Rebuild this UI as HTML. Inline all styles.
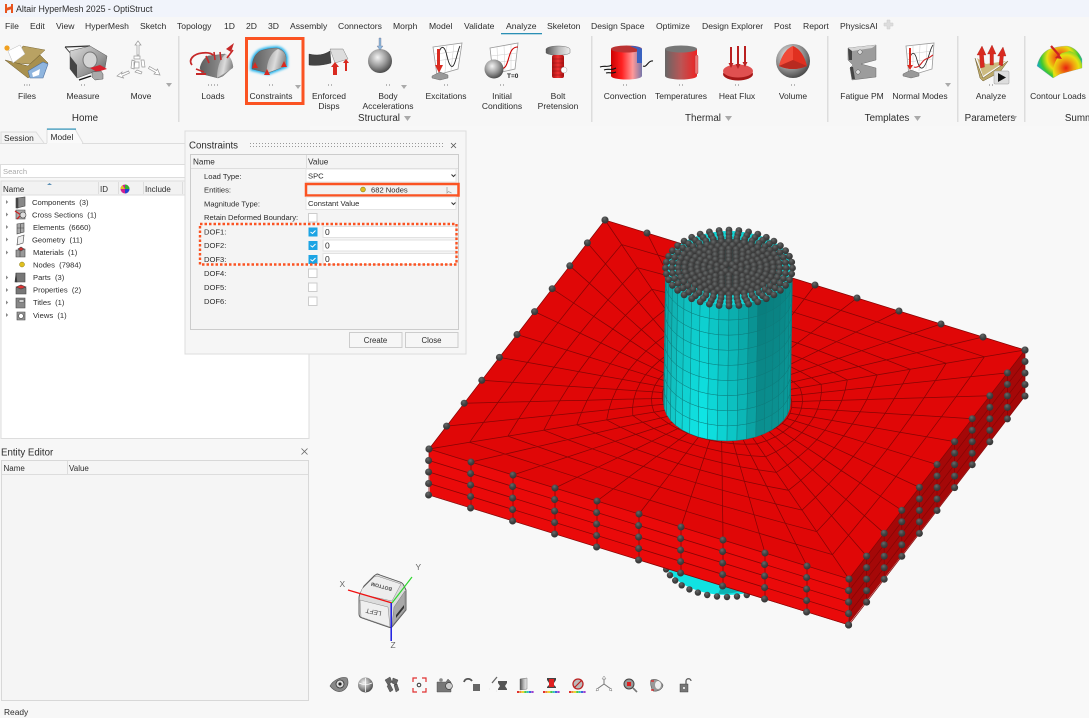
<!DOCTYPE html>
<html><head><meta charset="utf-8"><title>Altair HyperMesh 2025 - OptiStruct</title>
<style>
html,body{margin:0;padding:0;background:#f7f7f7;width:1089px;height:718px;overflow:hidden}
svg{display:block;filter:blur(.3px)}
text{font-family:"Liberation Sans",sans-serif;fill:#2c2c2c;font-size:8.5px}
.m text,.m{font-size:8.6px}
.r text{font-size:8.5px;text-anchor:middle}
.g text{font-size:9.8px;text-anchor:middle}
.t text{font-size:7.6px}
.d text{font-size:7.6px}
.h{font-size:8.2px}
</style></head><body>
<svg id="s" xmlns="http://www.w3.org/2000/svg" width="1089" height="718" viewBox="0 0 1089 718">
<defs>
<radialGradient id="ball" cx=".4" cy=".3" r=".75"><stop offset="0" stop-color="#666a6a"/><stop offset=".5" stop-color="#444"/><stop offset="1" stop-color="#303030"/></radialGradient>
<radialGradient id="sph" cx=".4" cy=".35" r=".75"><stop offset="0" stop-color="#f4f4f4"/><stop offset=".5" stop-color="#999"/><stop offset="1" stop-color="#333"/></radialGradient>
<linearGradient id="met" x1="0" x2="1"><stop offset="0" stop-color="#555"/><stop offset=".55" stop-color="#bbb"/><stop offset="1" stop-color="#eee"/></linearGradient>
<linearGradient id="body" x1="0" x2="1"><stop offset="0" stop-color="#5e5e5e"/><stop offset="1" stop-color="#a8a8a8"/></linearGradient>
<linearGradient id="front" x1="0" x2="1" y1="0" y2=".3"><stop offset="0" stop-color="#9a9a9a"/><stop offset=".55" stop-color="#dcdcdc"/><stop offset="1" stop-color="#8a8a8a"/></linearGradient>
<linearGradient id="met2" x1="0" x2="1" y1="0" y2="1"><stop offset="0" stop-color="#ddd"/><stop offset=".6" stop-color="#999"/><stop offset="1" stop-color="#555"/></linearGradient>
<linearGradient id="redc" x1="0" x2="1"><stop offset="0" stop-color="#c00"/><stop offset=".35" stop-color="#f22"/><stop offset=".7" stop-color="#f99"/><stop offset="1" stop-color="#77a"/></linearGradient>
<linearGradient id="tmp" x1="0" x2="1"><stop offset="0" stop-color="#666"/><stop offset=".5" stop-color="#b55"/><stop offset="1" stop-color="#e22"/></linearGradient>
<linearGradient id="bolt" x1="0" x2="1"><stop offset="0" stop-color="#a11"/><stop offset=".5" stop-color="#e33"/><stop offset="1" stop-color="#a11"/></linearGradient>
<radialGradient id="rain" gradientUnits="userSpaceOnUse" cx="1060" cy="58" r="26"><stop offset="0" stop-color="#e82010"/><stop offset=".3" stop-color="#f09010"/><stop offset=".5" stop-color="#e8e010"/><stop offset=".72" stop-color="#40c830"/><stop offset=".9" stop-color="#10b0c0"/><stop offset="1" stop-color="#2040e0"/></radialGradient>
<radialGradient id="rain2" gradientUnits="userSpaceOnUse" cx="1066" cy="68" r="20"><stop offset="0" stop-color="#e82010"/><stop offset=".4" stop-color="#f0a010"/><stop offset=".65" stop-color="#e8e010"/><stop offset="1" stop-color="#40c840"/></radialGradient>
<filter id="glow" x="-30%" y="-30%" width="160%" height="160%"><feGaussianBlur stdDeviation="1.4"/></filter>
</defs>

<rect width="1089" height="718" fill="#f8f8f8"/>
<rect width="1089" height="17" fill="#f1f4fb"/>
<rect y="17" width="1089" height="109" fill="#f7f7f7"/>

<g fill="#e8541e"><rect x="5" y="4" width="2" height="9"/><rect x="11" y="4" width="2" height="9"/><path d="M6 8l6-2v3l-6 2z"/></g>
<text x="16" y="12" style="font-size:8.8px">Altair HyperMesh 2025 - OptiStruct</text>

<g class="m">
<text x="5" y="29">File</text><text x="30" y="29">Edit</text><text x="56" y="29">View</text><text x="85" y="29">HyperMesh</text><text x="140" y="29">Sketch</text><text x="177" y="29">Topology</text><text x="224" y="29">1D</text><text x="246" y="29">2D</text><text x="268" y="29">3D</text><text x="290" y="29">Assembly</text><text x="338" y="29">Connectors</text><text x="393" y="29">Morph</text><text x="429" y="29">Model</text><text x="464" y="29">Validate</text><text x="506" y="29">Analyze</text><text x="547" y="29">Skeleton</text><text x="591" y="29">Design Space</text><text x="656" y="29">Optimize</text><text x="702" y="29">Design Explorer</text><text x="774" y="29">Post</text><text x="803" y="29">Report</text><text x="840" y="29">PhysicsAI</text>
</g>
<path d="M884 23h3v-3h3v3h3v3h-3v3h-3v-3h-3z" fill="#ddd" stroke="#ccc" stroke-width=".5"/>
<rect x="501" y="33" width="41" height="1.3" fill="#2a8fb5"/>

<!-- ribbon separators -->
<g fill="#ddd"><rect x="178" y="36" width="1.5" height="86"/><rect x="591" y="36" width="1.5" height="86"/><rect x="827" y="36" width="1.5" height="86"/><rect x="957" y="36" width="1.5" height="86"/><rect x="1024" y="36" width="1.5" height="86"/></g>

<!-- Files -->
<g>
<path d="M23 46l22 4-15 14-17-1z" fill="#b9a263" stroke="#7d6a35" stroke-width=".5"/>
<path d="M5 60l23 18 20-15-8-8-12 11z" fill="#a8904e" stroke="#6e5c2e" stroke-width=".5"/>
<path d="M8 51l12-6 5 9-12 9z" fill="#fff" stroke="#bbb" stroke-width=".5"/>
<circle cx="7" cy="48" r="2.600" fill="#f0a020"/>
<path d="M28 71l15-9 5 2-5 14-13 0z" fill="#8fb5de" stroke="#4e6f9e" stroke-width=".6"/><path d="M32 73l8-4-1 6-6 2z" fill="#fff"/>
</g>
<!-- Measure -->
<g>
<path d="M65 47l25-1" stroke="#333" stroke-width="1.200" fill="none"/><path d="M65 47l7 8" stroke="#333" stroke-width=".9"/>
<path d="M70 51l20-5 17 10-2 12-28 10-7-9z" fill="url(#met2)" stroke="#555" stroke-width=".5"/>
<path d="M70 56l7 9v13l-7-9z" fill="#444"/>
<ellipse cx="90" cy="60" rx="7" ry="8" fill="#d4d4d4" stroke="#777"/>
<path d="M90 68l10-3 7 4-10 3z" fill="#d8202c"/>
<path d="M92 72l9-1 2 3v5l-8 1-3-3z" fill="#aaa" stroke="#555" stroke-width=".5"/>
<path d="M79 80l12-4" stroke="#111" stroke-width="1.400"/>
</g>
<!-- Move -->
<g fill="#fff" stroke="#999" stroke-width=".7">
<path d="M138 41l3 4h-2v10h-2v-10h-2z"/>
<path d="M117 76l5-4-.5 2 7-3 1 2-7 3 1 2z"/>
<path d="M160 75l-6-1 1.500-1.500-7-4 1-2 7 4 1-1.500z"/>
<path d="M134 56h6v3h-6z M132 60l3 1-1 8-3-1z M141 60h3l1 7h-3z M137 70l5 2-1 2-6-2z M134 62h5v6h-5z"/>
</g>
<path d="M166 83h6l-3 4z" fill="#aaa"/>
<!-- Loads -->
<g>
<path d="M192 65c-4-5 1-11 10-12 7-1 12 1 11 4" fill="none" stroke="#c62828" stroke-width="1.800"/>
<path d="M200 68c1-5 4-10 8-12l17-2c5 2 7 8 8 13l-10 9-5 2-16-4z" fill="url(#body)" stroke="#555" stroke-width=".4"/>
<path d="M217 78c0-10 3-20 9-24 5 3 7 8 7 14z" fill="url(#front)"/>
<path d="M233 50l-6 8M221 60l-1-8M215 60l-1-8M209 63l-3-7M204 72l-8-3" stroke="#c62828" stroke-width="1.600" fill="none"/>
<path d="M234 43l-3 9-5-3z" fill="#c62828"/><path d="M196 74h10" stroke="#c62828" stroke-width="2"/>
</g>
<!-- Constraints -->
<rect x="246.500" y="38.500" width="56.500" height="65" fill="none" stroke="#fb5322" stroke-width="3"/>
<g>
<path d="M252 68c0-8 3-14 8-17 5-2 12-3 17-3 5 1 8 4 9 9l0 9-18 7-16-4z" fill="none" stroke="#18b0ee" stroke-width="3.600" filter="url(#glow)"/>
<path d="M252 68c0-8 3-14 8-17 5-2 12-3 17-3 5 1 8 4 9 9l0 9-18 7-16-4z" fill="url(#body)" stroke="#555" stroke-width=".4"/>
<path d="M267 73c-1-9 3-20 11-24 5 2 7 6 8 9l0 8z" fill="url(#front)"/>
<path d="M255 62l3 6h-6zM267 69l3 6h-6zM284 61l3 6h-6z" fill="#d92a20"/>
</g>
<path d="M295 85h6l-3 4z" fill="#aaa"/>
<!-- Enforced -->
<g>
<path d="M309 54c8 2 15 1 21-3l1 12c-7 2-15 3-22 2z" fill="#444" stroke="#222" stroke-width=".4"/>
<path d="M330 49l13 0 5 10-13 4z" fill="#ddd" stroke="#666" stroke-width=".4"/>
<path d="M335 62l4 5h-2v8h-4v-8h-2z M346 59l3 4h-2v8h-2v-8h-2z" fill="#d92a20"/>
</g>
<!-- Body -->
<circle cx="380" cy="61" r="12" fill="url(#sph)"/>
<path d="M379 38h2v8h2l-3 4-3-4h2z" fill="#8fb8dc" stroke="#557" stroke-width=".3"/>
<path d="M401 85h6l-3 4z" fill="#aaa"/>
<!-- Excitations -->
<g>
<path d="M433 47l29-4-4 26-21 6z" fill="#fff" stroke="#999" stroke-width=".8"/>
<path d="M440 46l-1 27M447 45l-2 27M454 44l-3 26M435 54l26-3M435 61l24-3" stroke="#ccc" stroke-width=".5"/>
<path d="M439 52c3-8 6-5 8 4s5 15 8 6 3-12 5-16" fill="none" stroke="#222" stroke-width=".9"/>
<path d="M437 49h3v16h3l-4 8-4-8h2z" fill="#d92a20"/>
<path d="M432 76l8-4 8 3v3l-8 2-8-2z" fill="#999" stroke="#555" stroke-width=".4"/>
</g>
<!-- Initial -->
<g>
<path d="M490 48l28-5-3 26-22 5z" fill="#fff" stroke="#999" stroke-width=".8"/>
<path d="M497 47l1 26M504 46l1 25M511 45l0 25M491 56l26-3M492 63l24-3" stroke="#ccc" stroke-width=".5"/>
<path d="M500 69c6 0 7-5 9-12s4-10 9-10" fill="none" stroke="#c00" stroke-width="1.100"/>
<circle cx="494" cy="69" r="9.500" fill="url(#sph)"/>
<text x="507" y="78" style="font-size:6.500px;font-weight:bold;fill:#222">T=0</text>
</g>
<!-- Bolt -->
<g>
<path d="M546 49c2-4 22-4 24 0v4c-4 3-20 3-24 0z" fill="url(#met)" stroke="#555" stroke-width=".4"/>
<rect x="552" y="55" width="12" height="23" rx="2" fill="url(#bolt)"/>
<path d="M552 59h12M552 63h12M552 67h12M552 71h12M552 75h12" stroke="#811" stroke-width=".6"/>
<circle cx="564" cy="70" r="3" fill="#fff" stroke="#888" stroke-width=".4"/>
</g>
<!-- Convection -->
<g>
<rect x="611" y="49" width="31" height="27" fill="url(#redc)"/><ellipse cx="626.500" cy="76" rx="15.500" ry="3.500" fill="url(#redc)"/>
<ellipse cx="626.500" cy="49" rx="15.500" ry="3.500" fill="#b33"/><path d="M630 46c5 0 11 1 12 3v14h-5v-14z" fill="#3a62c0"/>
<path d="M600 67c5-2 7 1 12-2 M604 70c4-2 7 1 12-2 M606 73c4-1 6 1 10-1 M643 66c4 2 5-6 10-5" stroke="#111" stroke-width="1.100" fill="none"/>
</g>
<!-- Temperatures -->
<g>
<rect x="665" y="49" width="32" height="27" fill="url(#tmp)"/><ellipse cx="681" cy="76" rx="16" ry="3.500" fill="url(#tmp)"/><ellipse cx="681" cy="49" rx="16" ry="3.500" fill="#777"/>
<rect x="695" y="55" width="3" height="19" rx="1.500" fill="#e77" stroke="#a33" stroke-width=".4"/>
</g>
<!-- Heat Flux -->
<g>
<ellipse cx="738" cy="74" rx="15" ry="6.500" fill="#a51818"/><ellipse cx="738" cy="71" rx="15" ry="6.500" fill="#e05050"/>
<path d="M730 47h2v16h1.500l-2.500 5-2.500-5h1.500zM737 46h2v18h1.500l-2.500 5-2.500-5h1.500zM744 46h2v16h1.500l-2.500 5-2.500-5h1.500z" fill="#b92020"/>
</g>
<!-- Volume -->
<g>
<circle cx="793" cy="61" r="17" fill="url(#sph)"/>
<path d="M793 46Q783 50 779 66Q793 72 807 66Q803 50 793 46z" fill="#e03020"/>
<path d="M793 60L793 46Q783 50 779 66z" fill="#f04a38"/><path d="M793 60L779 66Q793 72 807 66z" fill="#b82a20"/>
</g>
<!-- Fatigue PM -->
<g>
<path d="M848 48l28-3v15l-15 4 15 4v9l-24 3-2-12 3-3-3-3-2-2z" fill="#9c9c9c" stroke="#555" stroke-width=".4"/>
<path d="M848 48l28-3-4 3-20 3z" fill="#d8d8d8"/>
<path d="M848 48l4 3v9l-3 0zM850 67l3 0 2 12-3 0z" fill="#444"/>
<circle cx="860" cy="52" r="2.200" fill="#ddd" stroke="#555" stroke-width=".5"/><circle cx="858" cy="72" r="2.200" fill="#ddd" stroke="#555" stroke-width=".5"/>
</g>
<!-- Normal modes -->
<g>
<path d="M906 46l28-3-2 26-23 7z" fill="#fff" stroke="#999" stroke-width=".8"/>
<path d="M913 46l0 27M920 45l-1 26M927 44l-1 25M907 54l26-3M908 62l24-3" stroke="#ccc" stroke-width=".5"/>
<path d="M909 60c3-10 6-8 8 0s5 12 9 3 4-14 7-18" fill="none" stroke="#222" stroke-width=".8"/>
<path d="M914 67c6 2 8-7 12-8s5-3 7-4" fill="none" stroke="#c22" stroke-width="1.100"/>
<path d="M909 48h2v17h2l-3 5-3-5h2z" fill="#d92a20"/>
<path d="M903 74l8-4 8 3v3l-8 2-8-2z" fill="#999" stroke="#555" stroke-width=".4"/>
</g>
<path d="M945 83h6l-3 4z" fill="#aaa"/>
<!-- Analyze -->
<g>
<path d="M975 58l8 20 25-17-8 11-17 9-3-3z" fill="#bba868" stroke="#6e5c2e" stroke-width=".5"/>
<path d="M977 58l6 18 23-15-20 3z" fill="#cdbb80"/>
<path d="M982 46l4 9h-2.500l1 12-4 1-1-13h-2.500z M992 45l4 9h-2.500l0 11-3.500 0 0-11h-2.500z M1003 47l3 9h-2.500l-1 10-3.500-1 1-9h-2.500z" fill="#d92a20" stroke="#9a1a14" stroke-width=".3"/>
<rect x="994" y="71" width="15" height="13" rx="1" fill="#ddd" stroke="#999" stroke-width=".5"/>
<path d="M998 73l8 4.500-8 4.500z" fill="#111"/>
</g>
<!-- Contour -->
<g>
<path d="M1037 66c2-9 7-15 13-17 6-2 12-3 17-3 7 1 12 6 15 13v9l-22 6-7 4z" fill="url(#rain)" stroke="#99a" stroke-width=".3"/>
<path d="M1053 78c-1-9 2-20 9-25l8-2c6 2 10 7 12 13v4l-22 6z" fill="url(#rain2)"/>
<path d="M1051 46l8 9" stroke="#c22" stroke-width="2.200"/><path d="M1062 59l-7-1 4-4z" fill="#c22"/>
</g>
<!-- dots -->
<g fill="#777">
<rect x="24" y="84.500" width="1" height="1"/><rect x="26.500" y="84.500" width="1" height="1"/><rect x="29" y="84.500" width="1" height="1"/>
<rect x="81" y="84.500" width="1" height="1"/><rect x="84" y="84.500" width="1" height="1"/>
<rect x="208" y="84.500" width="1" height="1"/><rect x="211" y="84.500" width="1" height="1"/><rect x="214" y="84.500" width="1" height="1"/><rect x="217" y="84.500" width="1" height="1"/>
<rect x="269" y="84.500" width="1" height="1"/><rect x="272" y="84.500" width="1" height="1"/>
<rect x="328" y="84.500" width="1" height="1"/><rect x="331" y="84.500" width="1" height="1"/>
<rect x="386" y="84.500" width="1" height="1"/><rect x="389" y="84.500" width="1" height="1"/>
<rect x="444" y="84.500" width="1" height="1"/><rect x="447" y="84.500" width="1" height="1"/>
<rect x="500" y="84.500" width="1" height="1"/><rect x="503" y="84.500" width="1" height="1"/>
<rect x="623" y="84.500" width="1" height="1"/><rect x="626" y="84.500" width="1" height="1"/>
<rect x="679" y="84.500" width="1" height="1"/><rect x="682" y="84.500" width="1" height="1"/>
<rect x="735" y="84.500" width="1" height="1"/><rect x="738" y="84.500" width="1" height="1"/>
<rect x="791" y="84.500" width="1" height="1"/><rect x="794" y="84.500" width="1" height="1"/>
<rect x="989" y="84.500" width="1" height="1"/><rect x="992" y="84.500" width="1" height="1"/>
</g>
<g class="r">
<text x="27" y="99">Files</text><text x="83" y="99">Measure</text><text x="141" y="99">Move</text><text x="213" y="99">Loads</text><text x="271" y="99">Constraints</text>
<text x="329" y="99">Enforced</text><text x="329" y="109">Disps</text><text x="388" y="99">Body</text><text x="388" y="109">Accelerations</text>
<text x="446" y="99">Excitations</text><text x="502" y="99">Initial</text><text x="502" y="109">Conditions</text><text x="558" y="99">Bolt</text><text x="558" y="109">Pretension</text>
<text x="625" y="99">Convection</text><text x="681" y="99">Temperatures</text><text x="737" y="99">Heat Flux</text><text x="793" y="99">Volume</text>
<text x="862" y="99">Fatigue PM</text><text x="920" y="99">Normal Modes</text><text x="991" y="99">Analyze</text><text x="1058" y="99">Contour Loads</text>
</g>
<g class="g">
<text x="85" y="121">Home</text><text x="379" y="121">Structural</text><text x="703" y="121">Thermal</text><text x="887" y="121">Templates</text><text x="990" y="121">Parameters</text><text x="1079" y="121" >Summ</text>
</g>
<g fill="#aaa"><path d="M404 116h7l-3.500 5zM725 116h7l-3.500 5zM914 116h7l-3.500 5zM1012 116h5l-2.500 4z"/></g>

<!-- left panel -->
<rect x="0" y="126" width="310" height="592" fill="#f7f7f7"/>
<path d="M0 143.500h47M82 143.500h227" stroke="#ddd"/>
<path d="M1 143v-11h35l8 11" fill="#f4f4f4" stroke="#ddd"/>
<path d="M47 143v-14h28l8 14" fill="#fafafa" stroke="#ddd"/>
<rect x="47" y="128.500" width="29" height="1.200" fill="#2a8fb5"/>
<text x="4" y="141" style="font-size:8.400px">Session</text><text x="50.500" y="140" style="font-size:8.400px">Model</text>
<rect x="0.500" y="164.500" width="308" height="13" fill="#fff" stroke="#ddd"/>
<text x="3" y="174" style="font-size:7.600px;fill:#aaa">Search</text>
<rect x="1" y="181" width="308" height="14" fill="#f2f2f2" stroke="#ddd"/>
<rect x="1" y="195" width="308" height="243.500" fill="#fff" stroke="#ddd"/>
<path d="M98.500 182v12M118.500 182v12M143.500 182v12M182.500 182v12" stroke="#ddd"/>
<text class="h" x="3" y="192" style="font-size:8px">Name</text><text x="100" y="192" style="font-size:8px">ID</text><text x="145" y="192" style="font-size:8px">Include</text>
<path d="M47 185l2.500-2 2.500 2z" fill="#5a8fb5"/>
<circle cx="125" cy="189" r="4.500" fill="#d02090"/><path d="M125 189v-4.500a4.500 4.500 0 0 1 4.500 4.500z" fill="#30b030"/><path d="M125 189h4.500a4.500 4.500 0 0 1-4.500 4.500z" fill="#2040d0"/><path d="M125 189l-4.500 0a4.500 4.500 0 0 1 2-3.700z" fill="#e0c020"/>
<!-- tree -->
<path d="M6 200l2.200 2-2.200 2zM6 212.500l2.200 2-2.200 2zM6 225l2.200 2-2.200 2zM6 237.500l2.200 2-2.200 2zM6 250.500l2.200 2-2.200 2zM6 275.500l2.200 2-2.200 2zM6 288l2.200 2-2.200 2zM6 300.500l2.200 2-2.200 2zM6 313l2.200 2-2.200 2z" fill="#888"/>
<g class="t">
<text x="32" y="205">Components&#160; (3)</text><text x="32" y="217.500">Cross Sections&#160; (1)</text><text x="33" y="230">Elements&#160; (6660)</text><text x="32" y="242.500">Geometry&#160; (11)</text><text x="33" y="255">Materials&#160; (1)</text><text x="33" y="267.500">Nodes&#160; (7984)</text><text x="33" y="280">Parts&#160; (3)</text><text x="33" y="292.500">Properties&#160; (2)</text><text x="33" y="305">Titles&#160; (1)</text><text x="33" y="318">Views&#160; (1)</text>
</g>
<g stroke="#444" stroke-width=".6">
<path d="M17 198l8-1v9l-8 2z" fill="#888"/><path d="M16 198l2 0v10h-2z" fill="#444"/>
<path d="M16 210l9 0v9h-9z" fill="#aaa"/><path d="M15 211l6 4-4 4" fill="none" stroke="#c22" stroke-width="1.300"/><circle cx="23" cy="215" r="3" fill="#ddd"/>
<path d="M17 224l7-1v9l-7 2zM20.500 224v9M17 228h7" fill="#aaa"/>
<path d="M18 237l6-2-1 8-6 2z" fill="#eee"/>
<path d="M16 250h4v7h-4zM20 249h5v8h-5z" fill="#999"/><path d="M18 249l3-2 3 2-3 2z" fill="#c33"/>
<path d="M16 273h9v9h-9z" fill="#777"/><path d="M16 273l-1 9h2z" fill="#333"/>
<path d="M16 288l5-3 5 3v6h-10z" fill="#777"/><path d="M16 287l5-2 5 2-5 2z" fill="#d33"/>
<path d="M16 298h9v10h-9z" fill="#888"/><path d="M19 300h5v2h-5z" fill="#fff"/>
<path d="M17 312h8v8h-8z" fill="#999"/><circle cx="21" cy="316" r="2.500" fill="#fff"/>
</g>
<circle cx="22" cy="264.500" r="2.500" fill="#e0c020" stroke="#8a7a10" stroke-width=".5"/>

<!-- entity editor -->
<text x="1" y="455.500" style="font-size:9.700px">Entity Editor</text>
<path d="M301.500 448.500l6 6M307.500 448.500l-6 6" stroke="#666" stroke-width=".8"/>
<rect x="1.500" y="460.500" width="307" height="240" fill="#f5f5f5" stroke="#d8d8d8"/>
<path d="M2 474.500h306M67.500 461v13" stroke="#ddd"/>
<text x="3.500" y="471" style="font-size:8px">Name</text><text x="69" y="471" style="font-size:8px">Value</text>
<text x="4" y="715" style="font-size:8.400px">Ready</text>

<g id="scene"></g>

<!-- dialog -->
<rect x="185" y="131" width="281" height="223" fill="#f6f6f6" stroke="#ddd"/>
<text x="189" y="148.500" style="font-size:9.700px">Constraints</text>
<path d="M250 143.500H443M250 146.500H443" stroke="#999" stroke-width="1" stroke-dasharray="1 2"/>
<path d="M451 143l5 5M456 143l-5 5" stroke="#555" stroke-width=".8"/>
<rect x="190.500" y="154.500" width="268" height="175" fill="#f4f4f4" stroke="#ccc"/>
<path d="M191 168.500h267M306.500 155v13" stroke="#ddd"/>
<text x="193" y="164.500" style="font-size:8.200px">Name</text><text x="308" y="164.500" style="font-size:8.200px">Value</text>
<g class="d">
<text x="204" y="179">Load Type:</text><text x="204" y="192.500">Entities:</text><text x="204" y="206.500">Magnitude Type:</text><text x="204" y="220">Retain Deformed Boundary:</text>
<text x="204" y="234.500">DOF1:</text><text x="204" y="248">DOF2:</text><text x="204" y="262">DOF3:</text><text x="204" y="276">DOF4:</text><text x="204" y="290">DOF5:</text><text x="204" y="304">DOF6:</text>
</g>
<rect x="306" y="169" width="150" height="13" fill="#fff" stroke="#e4e4e4"/>
<text x="308" y="178.500" style="font-size:7.600px">SPC</text>
<path d="M451.500 174.500l2 2 2-2" stroke="#333" fill="none"/>
<rect x="307" y="184.500" width="151" height="11" fill="#f2f2f2"/>
<circle cx="363" cy="189.500" r="2.400" fill="#e0c020" stroke="#8a7a10" stroke-width=".6"/>
<text x="371" y="192.500" style="font-size:7.600px">682 Nodes</text>
<path d="M447 187l0 6 1.500-1.500 3 1.500" stroke="#999" fill="none" stroke-width=".7"/>
<rect x="306" y="184" width="152.500" height="11.500" fill="none" stroke="#fb5322" stroke-width="2.500"/>
<rect x="306" y="197" width="150" height="12.500" fill="#fff" stroke="#e4e4e4"/>
<text x="308" y="206" style="font-size:7.600px">Constant Value</text>
<path d="M451.500 202.500l2 2 2-2" stroke="#333" fill="none"/>
<g fill="#fff" stroke="#ccc">
<rect x="308.500" y="213.500" width="8.500" height="8.500"/>
<rect x="308.500" y="269" width="8.500" height="8.500"/><rect x="308.500" y="283" width="8.500" height="8.500"/><rect x="308.500" y="297" width="8.500" height="8.500"/>
</g>
<g fill="#fff" stroke="#e2e2e2"><rect x="323" y="226.500" width="133" height="11"/><rect x="323" y="240" width="133" height="11"/><rect x="323" y="253.500" width="133" height="11"/></g>
<g fill="#1ca4e4"><rect x="308.500" y="227.500" width="9" height="9"/><rect x="308.500" y="241" width="9" height="9"/><rect x="308.500" y="255" width="9" height="9"/></g>
<g stroke="#fff" stroke-width="1" fill="none"><path d="M310.500 232l2 1.500 3-3"/><path d="M310.500 245.500l2 1.500 3-3"/><path d="M310.500 259.500l2 1.500 3-3"/></g>
<g style="font-size:7.600px"><text x="325" y="235">0</text><text x="325" y="248.500">0</text><text x="325" y="262">0</text></g>
<rect x="200" y="224" width="256.500" height="40.500" fill="none" stroke="#fb5322" stroke-width="2.400" stroke-dasharray="2.500 2"/>
<rect x="349.500" y="332.500" width="52.500" height="15" fill="#f6f6f6" stroke="#ccc"/>
<rect x="405.500" y="332.500" width="52.500" height="15" fill="#f6f6f6" stroke="#ccc"/>
<text x="375.500" y="343" text-anchor="middle" style="font-size:7.800px">Create</text><text x="431.500" y="343" text-anchor="middle" style="font-size:7.800px">Close</text>

<!-- view cube -->
<g>
<path d="M377 574q1 0 3 1l20 7q3 1 4 4l2 4v20l-14 17q-2 1-4 0l-26-9q-3-1-3-4v-16q0-3 2-6l3-6 10-10q1-1 3-2z" fill="#dcdcdc" stroke="#555" stroke-width=".9"/>
<path d="M377 576l24 8-9 17-32-7 2-5 12-12z" fill="#ededed" stroke="#888" stroke-width=".5"/>
<path d="M360 600l28 7 2 20-29-10z" fill="#efefef" stroke="#888" stroke-width=".5"/>
<path d="M394 607l11-16 0 19-13 16z" fill="#a8a8a8" stroke="#777" stroke-width=".5"/>
<text transform="translate(382,585) rotate(195)" text-anchor="middle" style="font-size:5px;font-weight:bold;fill:#444">BOTTOM</text>
<text transform="translate(374,610) rotate(192)" text-anchor="middle" style="font-size:6.500px;fill:#444">LEFT</text>
<path d="M396 618l8-10v-3l-8 10z" fill="#333"/>
<path d="M392 603l-44-13" stroke="#f01010" stroke-width="1.300"/>
<path d="M392 603l20-26" stroke="#2ed62e" stroke-width="1.200"/>
<path d="M391.200 603v38" stroke="#1a1ae0" stroke-width="1.500"/>
<text x="339.500" y="587" style="font-size:8.400px;fill:#666">X</text><text x="415.500" y="570" style="font-size:8.400px;fill:#666">Y</text><text x="390.500" y="648" style="font-size:8.400px;fill:#666">Z</text>
</g>

<!-- bottom toolbar -->
<g>
<path d="M330 686c3-6 12-10 17-8 2 4 1 9-3 12s-9 2-14-4z" fill="#888" stroke="#555" stroke-width=".6"/><ellipse cx="340" cy="684" rx="4" ry="4" fill="#ddd" stroke="#333" stroke-width=".8"/><circle cx="340" cy="684" r="1.600" fill="#222"/>
<circle cx="365.500" cy="685" r="7.500" fill="url(#sph)"/><path d="M365.500 678v14M359 683c4 2 9 2 13 0" stroke="#fff" fill="none" stroke-width=".8"/>
<path d="M385 680l5-3 2 5-4 3zM393 678l5 2-2 5-4-2zM387 686l3-2 3 6-3 2zM394 685l3-1 2 6-3 2z" fill="#666" stroke="#333" stroke-width=".4"/>
<path d="M413 682v-4h4M422 678h4v4M426 688v4h-4M417 692h-4v-4" stroke="#e03030" stroke-width="1.200" fill="none"/><circle cx="419" cy="685" r="1.800" fill="none" stroke="#333"/>
<path d="M437 682h9l2-3 3 3v10h-14z" fill="#777" stroke="#444" stroke-width=".4"/><circle cx="449" cy="686" r="3.400" fill="#ccc" stroke="#333" stroke-width=".6"/><circle cx="441" cy="680" r="1.800" fill="#888"/>
<path d="M464 682c1-4 6-4 8-1" stroke="#555" fill="none" stroke-width="1.800"/><rect x="473" y="684" width="7" height="7" fill="#666"/>
<path d="M492 683l5-6M489 689h.1M496 691h.1" stroke="#666" stroke-width="1.300"/><path d="M498 681h9v2l-2 3 2 3v1h-9v-1l2-3-2-3z" fill="#555"/>
<path d="M520 679l7-1v11l-7 1z" fill="url(#met)" stroke="#555" stroke-width=".4"/>
<path d="M547 678h9v2l-2 3v2l2 2v1h-9v-1l2-2v-2l-2-3z" fill="#444"/><rect x="549" y="679" width="5" height="8" fill="#e02020"/>
<circle cx="578" cy="684" r="5" fill="#bbb" stroke="#b22" stroke-width="1.300"/><path d="M574 688l8-8" stroke="#b22" stroke-width="1.200"/>
<g id="strips"></g>
<path d="M604 677v7l-7 5M604 684l7 5" stroke="#777" fill="none"/><path d="M604 676l2 3h-4zM596 691l1-3 2 2zM612 691l-3-1 2-2z" fill="#fff" stroke="#777" stroke-width=".5"/>
<circle cx="629" cy="684" r="5" fill="#999" stroke="#444"/><rect x="627" y="682" width="4" height="4" fill="#d22"/><path d="M633 688l4 4" stroke="#777" stroke-width="1.600"/>
<path d="M651 680c5-2 10 1 12 5 0 4-5 7-10 6-2-3-3-8-2-11z" fill="#999" stroke="#444" stroke-width=".5"/><ellipse cx="658" cy="685" rx="3" ry="4" fill="#eee"/><path d="M651 681h3M651 690h3" stroke="#d22" stroke-width="1.300"/>
<rect x="680" y="684" width="8" height="8" fill="#777" stroke="#333" stroke-width=".4"/><circle cx="684" cy="688" r="1" fill="#fff"/><path d="M686 684v-3c0-3 5-3 5 0" stroke="#555" fill="none" stroke-width="1.200"/>
</g>
</svg>
<script>
(function(){
var S=document.getElementById("scene"),o=[];
function f(n){return n.toFixed(1)}
function ball(x,y,r){o.push('<circle cx="'+f(x)+'" cy="'+f(y)+'" r="'+(r||3.5)+'" fill="url(#ball)"/>')}
var T=[605,220],L=[429,449],Fr=[849,579],R=[1025,350],C=[727,400],H=46,
a=[(Fr[0]-L[0])/2,(Fr[1]-L[1])/2],b=[(T[0]-L[0])/2,(T[1]-L[1])/2];
function lerp(p,q,t){return [p[0]+(q[0]-p[0])*t,p[1]+(q[1]-p[1])*t]}
// rainbow strips
var cols=['#e03030','#f09030','#e8d830','#50c840','#30c0c0','#4060e0','#a040d0'],sb='';
[517,543,569].forEach(function(x0){for(var i=0;i<7;i++){sb+='<rect x="'+(x0+i*2.4)+'" y="691" width="2.2" height="2" fill="'+cols[i]+'"/>'}});
document.getElementById("strips").innerHTML=sb;
// underside
o.push('<ellipse cx="727" cy="557" rx="63" ry="38" fill="#11e2e2"/><path d="M718 594Q745 594 756 582L765 568L730 566Z" fill="#0bb2b2"/>');
for(var i=0;i<=20;i++){var p=Math.PI*i/20;ball(727+64*Math.cos(p),557+40*Math.sin(p),3.2)}
// plate sides
function P(a){return a.map(function(p){return f(p[0])+','+f(p[1])}).join(' ')}
o.push('<polygon points="'+P([L,Fr,[Fr[0]-1,Fr[1]+H],[L[0]+1,L[1]+H]])+'" fill="#ea0a0a"/>');
o.push('<polygon points="'+P([Fr,R,[R[0],R[1]+H],[Fr[0]-1,Fr[1]+H]])+'" fill="#a50808"/>');
var d='';
for(var k=1;k<=4;k++){var y=k*H/4;d+='M'+L[0]+' '+(L[1]+y)+'L'+Fr[0]+' '+(Fr[1]+y)+'L'+R[0]+' '+(R[1]+y)}
for(var i=0;i<=10;i++){var p=lerp(L,Fr,i/10);d+='M'+f(p[0])+' '+f(p[1])+'v'+H;p=lerp(Fr,R,i/10);d+='M'+f(p[0])+' '+f(p[1])+'v'+H}
o.push('<path d="'+d+'" fill="none" stroke="#860505" stroke-width=".75"/>');
// top
o.push('<polygon points="'+P([T,L,Fr,R])+'" fill="#e00707"/>');
var per=[];
for(var i=0;i<10;i++)per.push(lerp(L,Fr,i/10));
for(var i=0;i<10;i++)per.push(lerp(Fr,R,i/10));
for(var i=0;i<10;i++)per.push(lerp(R,T,i/10));
for(var i=0;i<10;i++)per.push(lerp(T,L,i/10));
var rn=8,grid=[];
for(var k=0;k<=rn;k++){grid[k]=[];var t=1-Math.pow(1-k/rn,1.4);
 for(var i=0;i<40;i++){var th=-3*Math.PI/4+i*Math.PI/20,c=.285,
  q=[C[0]+c*(Math.cos(th)*a[0]+Math.sin(th)*b[0]),C[1]+c*(Math.cos(th)*a[1]+Math.sin(th)*b[1])];
  grid[k][i]=lerp(per[i],q,t);}}
d='';
for(var k=0;k<=rn;k++){d+='M';for(var i=0;i<=40;i++){var g=grid[k][i%40];d+=(i?'L':'')+f(g[0])+' '+f(g[1])}}
for(var i=0;i<40;i++){d+='M';for(var k=0;k<=rn;k++){var g=grid[k][i];d+=(k?'L':'')+f(g[0])+' '+f(g[1])}}
o.push('<path d="'+d+'" fill="none" stroke="#860505" stroke-width=".75"/>');
// edge nodes
for(var i=0;i<=10;i++){var p=lerp(T,L,i/10);ball(p[0],p[1]);p=lerp(T,R,i/10);ball(p[0],p[1])}
for(var i=0;i<=10;i++){for(var k=0;k<5;k++){var p=lerp(L,Fr,i/10);ball(p[0]-.4*(k>0),p[1]+k*H/4);p=lerp(Fr,R,i/10);ball(p[0]-.4*(k>0&&i==0),p[1]+k*H/4)}}
// cylinder
var st=[[0,[18,176,176]],[.1,[17,202,202]],[.3,[15,228,228]],[.5,[12,200,200]],[.65,[11,176,176]],[.75,[10,140,140]],[.9,[11,144,144]],[1,[10,156,156]]];
function col(s,m){for(var j=0;j<st.length-1;j++){if(s<=st[j+1][0]){var u=(s-st[j][0])/(st[j+1][0]-st[j][0]),c=[];for(var n=0;n<3;n++)c[n]=Math.min(255,Math.round((st[j][1][n]+(st[j+1][1][n]-st[j][1][n])*u)*m));return 'rgb('+c+')'}}return 'rgb(10,150,150)'}
var T0=[729,268,63.5,37],B0=[727,403,63.5,38],rows=9,seg=20;
function pt(ph,u){return [T0[0]+(B0[0]-T0[0])*u+(T0[2]+(B0[2]-T0[2])*u)*Math.cos(ph),T0[1]+(B0[1]-T0[1])*u+(T0[3]+(B0[3]-T0[3])*u)*Math.sin(ph)]}
for(var r=0;r<rows;r++){for(var i=0;i<seg;i++){
 var p1=Math.PI-i*Math.PI/seg,p2=Math.PI-(i+1)*Math.PI/seg,u1=r/rows,u2=(r+1)/rows;
 var A=pt(p1,u1),Bb=pt(p2,u1),Cc=pt(p2,u2),Dd=pt(p1,u2),s2=(1-Math.cos((i+.5)*Math.PI/seg))/2;
 o.push('<polygon points="'+P([A,Bb,Cc,Dd])+'" fill="'+col(s2,.9+.12*(r/(rows-1)))+'" stroke="#0a7c7c" stroke-width=".45"/>');
}}
// cap
o.push('<ellipse cx="729" cy="268" rx="63.500" ry="37" fill="#12d4d4"/><ellipse cx="729" cy="267" rx="48" ry="28" fill="#3a4444"/>');
var ns=[],rs=[[1,40,0],[.9,40,0],[.8,40,0],[.7,36,0],[.6,32,.5],[.5,28,0],[.4,22,.5],[.3,16,0],[.2,10,.5],[.1,6,0]];
rs.forEach(function(q){for(var i=0;i<q[1];i++){var th=(i+q[2])*2*Math.PI/q[1];ns.push([729+63.5*q[0]*Math.cos(th),268+38*q[0]*Math.sin(th)])}});
ns.sort(function(x,y){return x[1]-y[1]});
ns.forEach(function(n){ball(n[0],n[1],3.4)});
S.innerHTML=o.join('');
})();
</script>
</body></html>
